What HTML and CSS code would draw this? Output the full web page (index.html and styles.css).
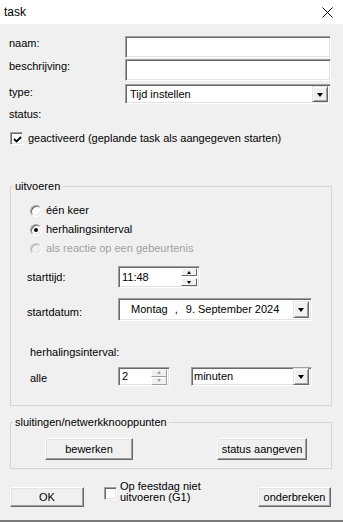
FILE: index.html
```html
<!DOCTYPE html>
<html>
<head>
<meta charset="utf-8">
<link rel="stylesheet" href="styles.css">
</head>
<body>
<div class="window">
  <div class="titlebar">
    <span class="title">task</span>
    <svg class="close" width="11" height="11" viewBox="0 0 11 11"><path d="M0.5 0.5 L10.5 10.5 M10.5 0.5 L0.5 10.5" stroke="#000" stroke-width="1" fill="none"/></svg>
  </div>
  <div class="client">
    <div class="form-grid">
      <span class="lbl">naam:</span><div class="edit"></div>
      <span class="lbl lbl-2">beschrijving:</span><div class="edit edit-2"></div>
      <span class="lbl lbl-3">type:</span>
      <div class="edit combo combo-type"><span class="combo-text">Tijd instellen</span><span class="dropbtn"><span class="tri"></span></span></div>
    </div>
    <div class="status">status:</div>
    <div class="check-row">
      <span class="checkbox"><svg width="9" height="9" viewBox="0 0 9 9"><path d="M1 4 L3.5 6.5 L8 2" stroke="#000" stroke-width="1.8" fill="none"/></svg></span>
      <span>geactiveerd (geplande task als aangegeven starten)</span>
    </div>

    <fieldset class="group g1">
      <legend>uitvoeren</legend>
      <div class="g1-body">
        <div class="radios">
          <div class="radio-row"><span class="radio"></span><span>één keer</span></div>
          <div class="radio-row"><span class="radio on"></span><span>herhalingsinterval</span></div>
          <div class="radio-row disabled"><span class="radio off"></span><span>als reactie op een gebeurtenis</span></div>
        </div>
        <div class="field-row row-time">
          <span class="lbl">starttijd:</span>
          <div class="edit spin-edit time-edit"><span>11:48</span>
            <span class="spinner"><span class="sbtn"><span class="tri-up"></span></span><span class="sbtn"><span class="tri-sm"></span></span></span>
          </div>
        </div>
        <div class="field-row row-date">
          <span class="lbl lbl-date">startdatum:</span>
          <div class="edit combo date-edit"><span class="date-text"><span>Montag</span><span class="comma">,</span><span>9. September 2024</span></span><span class="dropbtn big"><span class="tri"></span></span></div>
        </div>
        <div class="sub-lbl">herhalingsinterval:</div>
        <div class="field-row row-int">
          <span class="lbl">alle</span>
          <div class="int-wrap">
            <div class="edit spin-edit num-edit"><span>2</span>
              <span class="spinner dis"><span class="sbtn"><span class="tri-up"></span></span><span class="sbtn"><span class="tri-sm"></span></span></span>
            </div>
            <div class="edit combo unit-combo"><span class="combo-text">minuten</span><span class="dropbtn big"><span class="tri"></span></span></div>
          </div>
        </div>
      </div>
    </fieldset>

    <fieldset class="group g2">
      <legend>sluitingen/netwerkknooppunten</legend>
      <div class="g2-body">
        <button class="btn btn-edit">bewerken</button>
        <button class="btn btn-status">status aangeven</button>
      </div>
    </fieldset>

    <div class="bottom-row">
      <button class="btn btn-ok">OK</button>
      <span class="checkbox cb-holiday"></span>
      <span class="holiday-text">Op feestdag niet<br>uitvoeren (G1)</span>
      <button class="btn btn-cancel">onderbreken</button>
    </div>
  </div>
</div>
</body>
</html>
```
FILE: styles.css
```css
* { box-sizing: border-box; }
body {
  margin: 0;
  font: 11px/13px "Liberation Sans", Arial, sans-serif;
  color: #000;
  background: #f0f0f0;
}
.window {
  width: 343px;
  height: 522px;
  background: #f0f0f0;
  border-bottom: 2px solid #7a7a7a;
  display: flex;
  flex-direction: column;
}
.titlebar {
  height: 24px;
  background: #fff;
  display: flex;
  align-items: center;
  justify-content: space-between;
  padding: 0 10px 0 4px;
  font-size: 12px;
  flex: none;
}
.close { margin-top: 0; }
.client {
  padding: 12px 12px 0 9px;
}
.form-grid {
  display: grid;
  grid-template-columns: 116px 1fr;
  align-items: start;
}
.lbl { padding-top: 1px; }
.lbl-2 { margin-top: 1px; }
.lbl-3 { margin-top: 3px; padding-top: 2px; }
.edit {
  background: #fff;
  border-top: 1px solid #a0a0a0;
  border-left: 1px solid #a0a0a0;
  border-bottom: 1px solid #fff;
  border-right: 1px solid #fff;
  box-shadow: inset 1px 1px 0 #696969, inset -1px -1px 0 #e3e3e3;
  height: 22px;
}
.edit-2 { margin-top: 1px; }
.combo {
  display: flex;
  align-items: center;
  justify-content: space-between;
  padding: 2px 2px 2px 2px;
}
.combo-type { margin-top: 3px; height: 20px; padding-left: 4px; }
.combo-text { line-height: 13px; }
.dropbtn {
  width: 16px;
  height: 16px;
  background: #f0f0f0;
  border-top: 1px solid #e3e3e3;
  border-left: 1px solid #e3e3e3;
  border-right: 1px solid #696969;
  border-bottom: 1px solid #696969;
  box-shadow: inset 1px 1px 0 #fff, inset -1px -1px 0 #a0a0a0;
  display: flex;
  align-items: center;
  justify-content: center;
}
.tri {
  width: 0; height: 0;
  border-left: 3.5px solid transparent;
  border-right: 3.5px solid transparent;
  border-top: 4px solid #000;
  margin-top: 1px;
}
.status { margin-top: 4px; }
.check-row {
  margin-top: 11px;
  margin-left: 1px;
  display: flex;
  align-items: center;
  gap: 5px;
  height: 13px;
}
.checkbox {
  width: 13px;
  height: 13px;
  background: #fff;
  border-top: 1px solid #a0a0a0;
  border-left: 1px solid #a0a0a0;
  border-bottom: 1px solid #fff;
  border-right: 1px solid #fff;
  box-shadow: inset 1px 1px 0 #696969, inset -1px -1px 0 #e3e3e3;
  display: flex;
  align-items: center;
  justify-content: center;
  flex: none;
}
.checkbox svg { margin-left: 1px; margin-top: 1px; }

.group {
  margin: 0 -1px 0 1px;
  padding: 0;
  border: 1px solid #d5d5d5;
  min-width: 0;
}
.group legend {
  padding: 0 2px;
  margin-left: 2px;
  line-height: 13px;
}
.g1 { margin-top: 35px; }
.g1-body { padding: 11px 0 19px 16px; }
.radios {
  margin-left: 3px;
  display: flex;
  flex-direction: column;
  gap: 6px;
}
.radio-row {
  display: flex;
  align-items: center;
  gap: 4px;
  height: 13px;
}
.radio-row.disabled { color: #a0a0a0; }
.radio {
  width: 12px;
  height: 12px;
  border-radius: 50%;
  background: #fff;
  border: 1px solid;
  border-color: #a0a0a0 #fff #fff #a0a0a0;
  box-shadow: inset 1px 1px 0 #696969, inset -1px -1px 0 #e3e3e3;
  display: flex;
  align-items: center;
  justify-content: center;
  flex: none;
}
.radio.on::after {
  content: "";
  width: 4px;
  height: 4px;
  border-radius: 50%;
  background: #000;
}
.radio.off {
  background: #f0f0f0;
  border-color: #c8c8c8 #fff #fff #c8c8c8;
  box-shadow: inset 1px 1px 0 #b4b4b4, inset -1px -1px 0 #e3e3e3;
}
.field-row {
  display: grid;
  grid-template-columns: 91px auto;
  align-items: center;
}
.row-time { margin-top: 11px; }
.spin-edit {
  display: flex;
  align-items: center;
  justify-content: space-between;
  padding: 1px 2px 1px 3px;
}
.time-edit { width: 82px; height: 22px; }
.spinner {
  display: flex;
  flex-direction: column;
  gap: 2px;
}
.sbtn {
  width: 16px;
  height: 8px;
  background: #f0f0f0;
  border-top: 1px solid #fff;
  border-left: 1px solid #fff;
  border-right: 1px solid #696969;
  border-bottom: 1px solid #696969;
  display: flex;
  align-items: center;
  justify-content: center;
}
.tri-up {
  width: 0; height: 0;
  border-left: 2.5px solid transparent;
  border-right: 2.5px solid transparent;
  border-bottom: 3px solid #000;
}
.tri-sm {
  width: 0; height: 0;
  border-left: 2.5px solid transparent;
  border-right: 2.5px solid transparent;
  border-top: 3px solid #000;
}
.spinner.dis .sbtn { border-right-color: #a0a0a0; border-bottom-color: #a0a0a0; }
.spinner.dis .tri-up { border-bottom-color: #a0a0a0; }
.spinner.dis .tri-sm { border-top-color: #a0a0a0; }
.spinner.dis { gap: 0; }
.row-date { margin-top: 10px; }
.lbl-date { padding-top: 5px; }
.date-edit { width: 194px; height: 23px; padding-left: 12px; }
.date-text { display: flex; }
.comma { margin: 0 8px 0 7px; }
.dropbtn.big { width: 16px; height: 17px; }
.sub-lbl { margin: 25px 0 0 3px; }
.row-int { margin-top: 8px; }
.row-int .lbl { padding-left: 3px; padding-top: 3px; }
.int-wrap { display: flex; gap: 21px; }
.num-edit { width: 52px; height: 19px; padding-top: 0; padding-bottom: 0; }
.unit-combo { width: 121px; height: 19px; padding-top: 1px; padding-bottom: 1px; }
.unit-combo .combo-text { padding-left: 0; }

.g2 { margin-top: 10px; }
.g2-body {
  padding: 9px 24px 8px 34px;
  display: flex;
  justify-content: space-between;
}
.btn {
  font: inherit;
  color: #000;
  background: #f0f0f0;
  border-top: 1px solid #fff;
  border-left: 1px solid #fff;
  border-right: 1px solid #696969;
  border-bottom: 1px solid #696969;
  box-shadow: inset -1px -1px 0 #a0a0a0, inset 1px 1px 0 #e3e3e3;
  padding: 0;
  height: 22px;
}
.btn-edit { width: 88px; }
.btn-status { width: 90px; }
.bottom-row {
  margin-top: 18px;
  display: flex;
  align-items: flex-start;
}
.btn-ok { width: 74px; height: 20px; margin-left: 1px; }
.cb-holiday { margin-left: 20px; }
.holiday-text { margin: -6px 0 0 3px; line-height: 11px; }
.btn-cancel { width: 73px; height: 20px; margin-left: auto; }
```
